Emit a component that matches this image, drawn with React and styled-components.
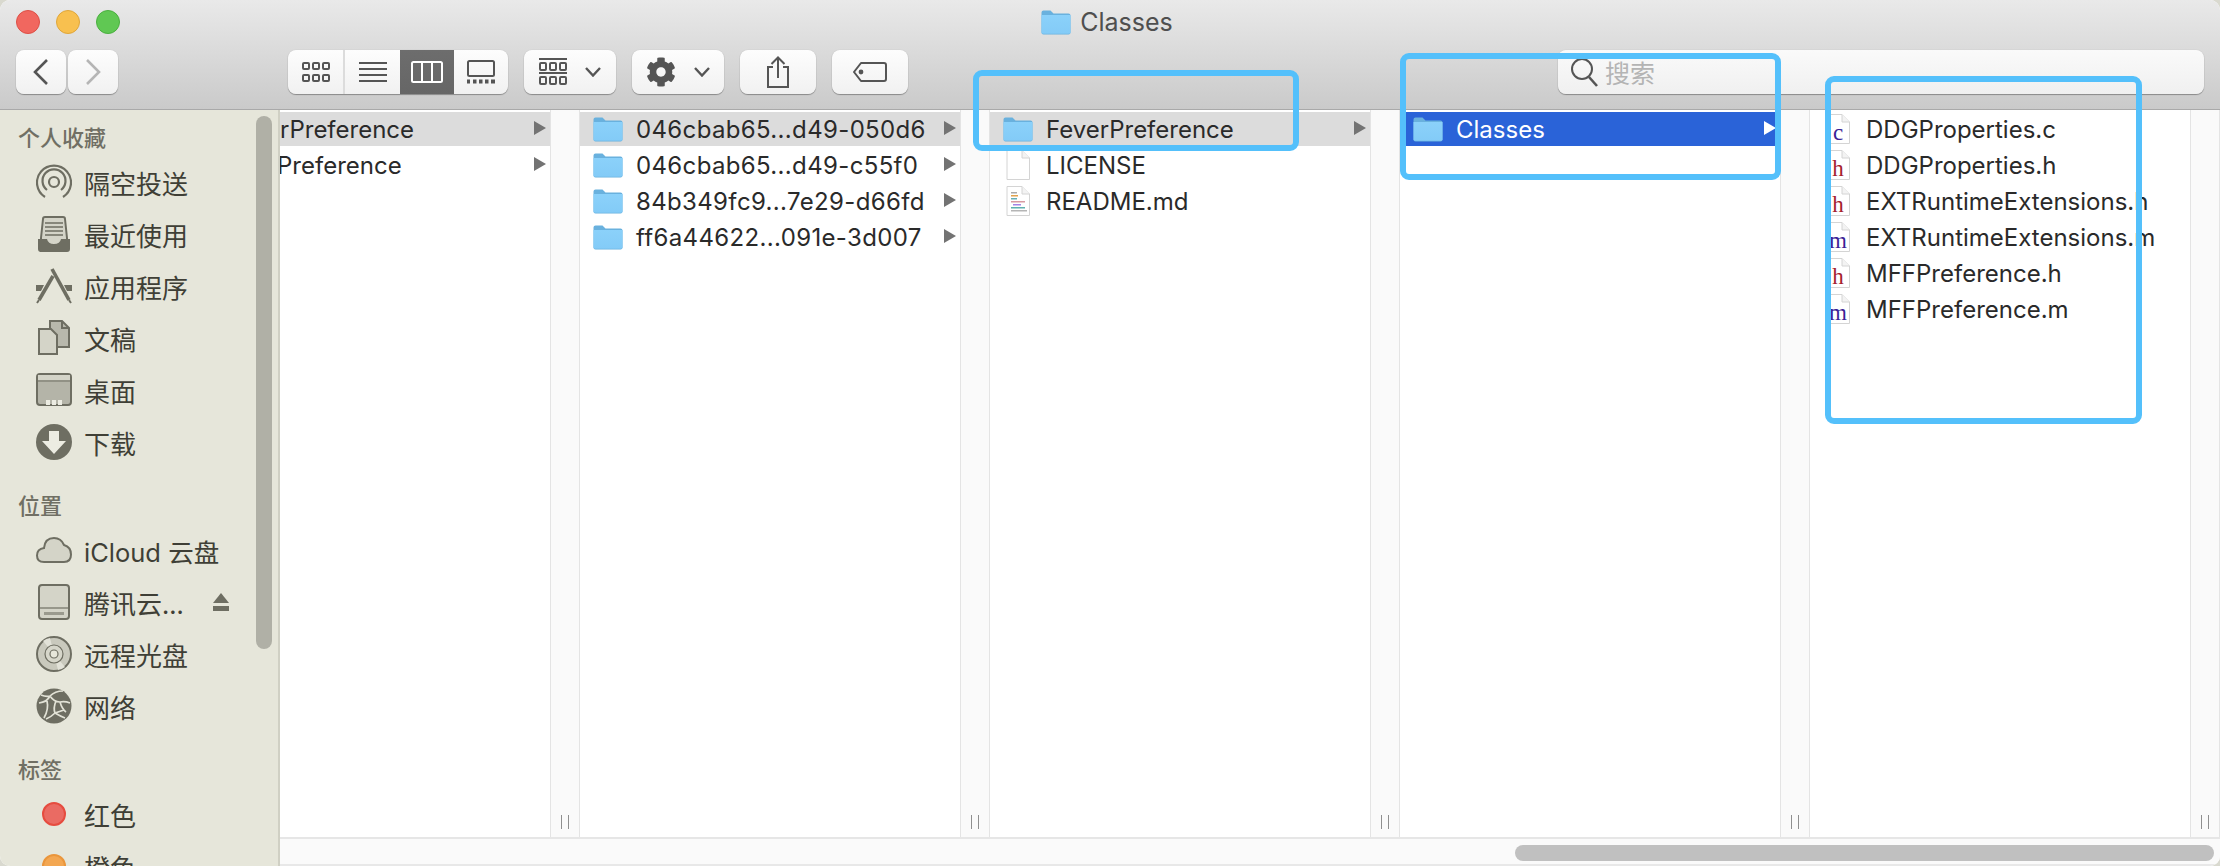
import React from "react";
import styled, { createGlobalStyle } from "styled-components";
import { FaCog } from "react-icons/fa";

const latin = `Inter, "Noto Sans CJK SC", sans-serif`;

const GlobalStyle = createGlobalStyle`
  html, body {
    margin: 0;
    padding: 0;
    background: #d9d9cf;
    overflow: hidden;
  }
`;

const Window = styled.div`
  position: relative;
  width: 2220px;
  height: 866px;
  display: flex;
  flex-direction: column;
  overflow: hidden;
  border-radius: 10px;
  font-family: ${latin};
  background: #fff;
`;

const Toolbar = styled.header`
  flex: none;
  height: 110px;
  box-sizing: border-box;
  border-bottom: 1px solid #a9a9a9;
  background: linear-gradient(#e9e9e9, #cacaca);
`;

const TitleRow = styled.div`
  height: 50px;
  display: grid;
  grid-template-columns: 1fr auto 1fr;
  align-items: center;
  padding: 0 16px;
  box-sizing: border-box;
  padding-bottom: 6px;
`;

const Lights = styled.div`
  display: flex;
  gap: 16px;
`;

const Light = styled.span`
  width: 24px;
  height: 24px;
  box-sizing: border-box;
  border-radius: 50%;
  background: ${(p) => p.$color};
  border: 1px solid ${(p) => p.$edge};
`;

const Title = styled.div`
  display: flex;
  align-items: center;
  gap: 9px;
  margin-left: -6px;
  font-size: 25px;
  color: #4f4f4f;
`;

const ToolRow = styled.div`
  display: flex;
  align-items: flex-start;
  padding: 0 16px;
`;

const Btn = styled.div`
  height: 44px;
  width: ${(p) => p.$w}px;
  margin-left: ${(p) => p.$ml || 0}px;
  flex: none;
  box-sizing: border-box;
  display: flex;
  align-items: center;
  justify-content: center;
  gap: ${(p) => p.$gap || 0}px;
  border-radius: 8px;
  background: linear-gradient(#fdfdfd, #f1f1f1);
  box-shadow: 0 1px 1px rgba(0, 0, 0, 0.32), 0 0 1px rgba(0, 0, 0, 0.2);
  color: #555;
`;

const Segments = styled.div`
  display: flex;
  height: 44px;
  width: 220px;
  margin-left: ${(p) => p.$ml}px;
  border-radius: 8px;
  overflow: hidden;
  background: linear-gradient(#fdfdfd, #f1f1f1);
  box-shadow: 0 1px 1px rgba(0, 0, 0, 0.32), 0 0 1px rgba(0, 0, 0, 0.2);
`;

const Segment = styled.div`
  width: ${(p) => p.$w}px;
  display: flex;
  align-items: center;
  justify-content: center;
  box-sizing: border-box;
  border-right: ${(p) => (p.$line ? "2px solid #dcdcdc" : "0")};
  color: ${(p) => (p.$on ? "#fff" : "#555")};
  background: ${(p) => (p.$on ? "linear-gradient(#6d6d6d, #666)" : "transparent")};
`;

const Search = styled.div`
  margin-left: auto;
  width: 646px;
  height: 44px;
  box-sizing: border-box;
  padding-left: 12px;
  display: flex;
  align-items: center;
  gap: 7px;
  border-radius: 8px;
  background: linear-gradient(#fafafa, #f0f0f0);
  box-shadow: 0 1px 1px rgba(0, 0, 0, 0.32), 0 0 1px rgba(0, 0, 0, 0.2);
  color: #b4b4b4;
  font-size: 25px;
`;

const Body = styled.div`
  flex: 1;
  min-height: 0;
  display: flex;
`;

const Sidebar = styled.aside`
  position: relative;
  flex: none;
  width: 280px;
  box-sizing: border-box;
  padding-top: 6px;
  overflow: hidden;
  background: #e6e6da;
  border-right: 2px solid #d0d0c4;
  font-family: "Noto Sans CJK SC", Inter, sans-serif;
`;

const SideThumb = styled.div`
  position: absolute;
  left: 256px;
  top: 6px;
  width: 16px;
  height: 533px;
  border-radius: 8px;
  background: #b0b0a6;
`;

const SideHead = styled.div`
  height: 40px;
  margin-top: ${(p) => p.$mt || 0}px;
  padding-left: 18px;
  display: flex;
  align-items: center;
  font-size: 22px;
  font-weight: 500;
  color: #706f64;
`;

const SideItem = styled.div`
  height: 52px;
  display: flex;
  align-items: center;
  gap: 12px;
  padding-left: 36px;
  font-size: 26px;
  color: #3f3f36;
`;

const SideLabel = styled.span`
  font-family: ${latin};
  font-size: 25.5px;
`;

const Eject = styled.svg`
  margin-left: 17px;
  flex: none;
`;

const Main = styled.main`
  flex: 1;
  min-width: 0;
  display: flex;
  flex-direction: column;
`;

const Columns = styled.div`
  flex: none;
  height: 727px;
  display: flex;
  overflow: hidden;
`;

const Column = styled.section`
  flex: none;
  width: ${(p) => p.$w}px;
  padding-top: 2px;
  box-sizing: border-box;
  overflow: hidden;
`;

const Divider = styled.div`
  flex: none;
  width: 30px;
  box-sizing: border-box;
  background: #fafafa;
  border-left: 1px solid #e4e4e4;
  border-right: 1px solid #e4e4e4;
  display: flex;
  justify-content: center;
  align-items: flex-end;
  gap: 6px;
  padding-bottom: 8px;
`;

const Grip = styled.span`
  width: 1px;
  height: 14px;
  background: #8f8f8f;
`;

const Row = styled.div`
  height: 34px;
  margin-bottom: 2px;
  display: flex;
  align-items: center;
  gap: 13px;
  padding: 0 4px 0 ${(p) => p.$pl ?? 13}px;
  font-size: 24px;
  white-space: nowrap;
  color: ${(p) => (p.$blue ? "#fff" : "#2a2a2a")};
  background: ${(p) => (p.$blue ? "#2a63d8" : p.$sel ? "#dcdcdc" : "transparent")};
`;

const Name = styled.span`
  margin-left: ${(p) => p.$ml || 0}px;
  letter-spacing: ${(p) => p.$track || 0}px;
`;

const Arrow = styled.span`
  margin-left: auto;
  width: 0;
  height: 0;
  border-left: 12px solid ${(p) => (p.$blue ? "#fff" : "#737373")};
  border-top: 7px solid transparent;
  border-bottom: 7px solid transparent;
  margin-top: -3px;
`;

const HScroll = styled.div`
  flex: 1;
  box-sizing: border-box;
  background: #fafafa;
  border-top: 2px solid #e6e6e6;
  border-bottom: 2px solid #e8e8e8;
  padding: 6px 6px 0 0;
  display: flex;
  justify-content: flex-end;
`;

const HThumb = styled.div`
  width: 699px;
  height: 16px;
  border-radius: 8px;
  background: #c0c0c0;
`;

const Mark = styled.div`
  position: absolute;
  left: ${(p) => p.$x}px;
  top: ${(p) => p.$y}px;
  width: ${(p) => p.$w}px;
  height: ${(p) => p.$h}px;
  box-sizing: border-box;
  border: 6px solid #54c0fb;
  border-radius: 9px;
  pointer-events: none;
`;

function Folder({ w = 30, h = 25 }) {
  return (
    <svg width={w} height={h} viewBox="0 0 30 25" style={{ flex: "none" }}>
      <defs>
        <linearGradient id="fld" x1="0" y1="0" x2="0" y2="1">
          <stop offset="0" stopColor="#8bd1fa" />
          <stop offset="1" stopColor="#83cbf7" />
        </linearGradient>
      </defs>
      <path d="M0.5 2.5Q0.5 0.5 2.5 0.5H9.5L12.5 3.5H27.5Q29.5 3.5 29.5 5.5V22.5Q29.5 24.5 27.5 24.5H2.5Q0.5 24.5 0.5 22.5Z" fill="#69b1de" />
      <path d="M0.5 5H29.5V22.5Q29.5 23.8 27.5 23.8H2.5Q0.5 23.8 0.5 22.500Z" fill="url(#fld)" />
    </svg>
  );
}

function Page({ letter, color, lines }) {
  return (
    <svg width="30" height="30" viewBox="0 0 30 30" style={{ flex: "none" }}>
      <path d="M4 .5H19L26.5 8V29.5H4Z" fill="#fff" stroke="#d4d4d4" />
      <path d="M19 .5V8H26.5" fill="#f3f3f3" stroke="#d4d4d4" />
      {letter && (
        <text x="15" y="25.500" textAnchor="middle" fontFamily="Liberation Serif, serif" fontSize="23" fill={color}>
          {letter}
        </text>
      )}
      {lines && (
        <g>
          <rect x="8" y="6" width="6" height="1.5" fill="#aaa" />
          <rect x="8" y="9" width="7" height="1.5" fill="#e2a24e" />
          <rect x="8" y="12" width="6" height="1.5" fill="#66aeb5" />
          <rect x="8" y="15" width="14" height="1.5" fill="#d89aa2" />
          <rect x="10" y="18" width="8" height="1.5" fill="#a583e6" />
          <rect x="8" y="21" width="14" height="1.5" fill="#5fb0b0" />
          <rect x="8" y="24" width="16" height="1.5" fill="#b5b5b5" />
        </g>
      )}
    </svg>
  );
}

const IconViewIcon = () => (
  <svg width="28" height="22" viewBox="0 0 28 22" fill="none" stroke="currentColor" strokeWidth="2">
    {[1, 11, 21].map((x) =>
      [2, 14].map((y) => <rect key={`${x}${y}`} x={x} y={y} width="6" height="6" rx="1" />)
    )}
  </svg>
);

const ListViewIcon = () => (
  <svg width="28" height="22" viewBox="0 0 28 22" stroke="currentColor" strokeWidth="2">
    <path d="M0 2H28M0 8H28M0 14H28M0 20H28" />
  </svg>
);

const ColumnViewIcon = () => (
  <svg width="32" height="22" viewBox="0 0 32 22" fill="none" stroke="currentColor" strokeWidth="2">
    <rect x="1" y="1" width="30" height="20" rx="1.5" />
    <path d="M11 1V21M21 1V21" />
  </svg>
);

const GalleryViewIcon = () => (
  <svg width="28" height="24" viewBox="0 0 28 24" fill="none" stroke="currentColor">
    <rect x="1" y="1" width="26" height="15" rx="1.5" strokeWidth="2" />
    <path d="M0 21.5H3M6 21.5H9.5M12 21.5H15.5M18 21.5H21.5M24 21.5H28" strokeWidth="4" />
  </svg>
);

const ArrangeIcon = () => (
  <svg width="28" height="28" viewBox="0 0 28 28" fill="none" stroke="currentColor" strokeWidth="2">
    <path d="M0 1H28M0 15H28" />
    {[1, 11, 21].map((x) =>
      [5, 19].map((y) => <rect key={`${x}${y}`} x={x} y={y} width="6" height="7" rx="1" />)
    )}
  </svg>
);

const Chevron = () => (
  <svg width="16" height="10" viewBox="0 0 16 10" fill="none" stroke="currentColor" strokeWidth="2.4">
    <path d="M1 1L8 8.5L15 1" />
  </svg>
);

const ShareIcon = () => (
  <svg width="22" height="32" viewBox="0 0 22 32" fill="none" stroke="currentColor" strokeWidth="2">
    <path d="M6 11H1V31H21V11H16" />
    <path d="M11 22V1.500M4.500 8L11 1.500L17.500 8" />
  </svg>
);

const TagIcon = () => (
  <svg width="34" height="20" viewBox="0 0 34 20" fill="none" stroke="currentColor" strokeWidth="2">
    <path d="M8 1H31Q33 1 33 3V17Q33 19 31 19H8L1 10Z" strokeLinejoin="round" />
    <circle cx="8" cy="10" r="1.4" fill="currentColor" />
  </svg>
);

const SearchIcon = () => (
  <svg width="28" height="30" viewBox="0 0 28 30" fill="none" stroke="#555" strokeWidth="2">
    <circle cx="12" cy="12" r="10" />
    <path d="M19 20L27 29" strokeWidth="2.6" />
  </svg>
);

const stroke = "#6e6e62";
const fill = "#d4d4c8";

const sideIcons = {
  airdrop: (
    <g fill="none" stroke={stroke} strokeWidth="2.2">
      <path d="M9 33A17 17 0 1 1 27 33" />
      <path d="M11 26A11.500 11.500 0 1 1 25 26" />
      <circle cx="18" cy="18" r="5" />
    </g>
  ),
  recents: (
    <g>
      <path d="M5 22L7 3Q7 1 9 1H27Q29 1 29 3L31 22V33Q31 35 29 35H5Z" fill={fill} stroke={stroke} strokeWidth="2" />
      <path d="M9 7H27M9 11H27M9 15H27M9 19H27" stroke={stroke} strokeWidth="1.6" />
      <path d="M2 23H11Q12 28 18 28Q24 28 25 23H34V33Q34 36 31 36H5Q2 36 2 33Z" fill={stroke} />
    </g>
  ),
  apps: (
    <g stroke={stroke} fill="none">
      <path d="M0 17H36V23H31L28 17H8L5 23H0Z" fill={stroke} stroke="none" />
      <path d="M16 1L33 32" strokeWidth="3.6" />
      <path d="M17 8L3 32" strokeWidth="3.6" />
      <path d="M33 32L35 35M3 32L1 35" strokeWidth="2" />
    </g>
  ),
  docs: (
    <g stroke={stroke} strokeWidth="2">
      <path d="M14 1H26L33 8V27H14Z" fill="#b8b8ac" />
      <path d="M3 9H15L21 15V34H3Z" fill={fill} />
      <path d="M14 1V9M26 1V8H33" fill="none" />
    </g>
  ),
  desktop: (
    <g>
      <rect x="1" y="2" width="34" height="31" rx="3" fill="#b4b4a8" stroke={stroke} strokeWidth="2" />
      <path d="M1 9H35" stroke={stroke} strokeWidth="1" />
      <rect x="2" y="3" width="32" height="5" fill={fill} />
      <path d="M10 28H14V33H10ZM16 28H20V33H16ZM22 28H26V33H22Z" fill="#ecece2" />
    </g>
  ),
  download: (
    <g>
      <circle cx="18" cy="18" r="18" fill={stroke} />
      <path d="M13 7H23V17H30L18 30L6 17H13Z" fill="#ecece2" />
    </g>
  ),
  cloud: (
    <path d="M8 30Q1 30 1 23.500Q1 17 8 16Q9 6 18 6Q25 6 28 13Q35 15 35 22.500Q35 30 28 30Z" fill={fill} stroke={stroke} strokeWidth="2" />
  ),
  drive: (
    <g stroke={stroke} strokeWidth="2">
      <rect x="3" y="1" width="30" height="34" rx="3" fill={fill} />
      <path d="M3 24H33" fill="none" strokeWidth="1.200" />
      <rect x="8" y="28" width="20" height="3" fill="#9a9a8e" strokeWidth="0" />
    </g>
  ),
  disc: (
    <g fill="none" stroke={stroke}>
      <circle cx="18" cy="18" r="17" fill="#c9c9bd" strokeWidth="2" />
      <path d="M18 18L7 5A17 17 0 0 1 14 2Z" fill="#e2e2d8" stroke="none" />
      <path d="M18 18L29 31A17 17 0 0 1 22 34Z" fill="#e2e2d8" stroke="none" />
      <circle cx="18" cy="18" r="9" strokeWidth="1.200" fill="#d6d6ca" />
      <circle cx="18" cy="18" r="4" strokeWidth="1.200" fill="#e6e6da" />
    </g>
  ),
  network: (
    <g fill="none">
      <circle cx="18" cy="18" r="17.500" fill={stroke} />
      <path d="M5 7Q10 9 14 8Q19 3 27 3M14 8Q11 14 3 15M11 13Q13 21 8 30M14 8Q18 14 24 14Q29 13 34 15M20 13Q17 20 19 25Q15 29 10 31M19 25Q24 28 29 30M24 14Q26 21 30 24M19 25L28 22" stroke="#e2e2d6" strokeWidth="1.700" />
    </g>
  ),
};

function SideIcon({ name }) {
  return (
    <svg width="36" height="36" viewBox="0 0 36 36" style={{ flex: "none" }}>
      {sideIcons[name]}
    </svg>
  );
}

function TagDot({ color, edge }) {
  return (
    <svg width="36" height="36" viewBox="0 0 36 36" style={{ flex: "none" }}>
      <circle cx="18" cy="18" r="11" fill={color} stroke={edge} strokeWidth="2" />
    </svg>
  );
}

const favourites = [
  ["airdrop", "隔空投送"],
  ["recents", "最近使用"],
  ["apps", "应用程序"],
  ["docs", "文稿"],
  ["desktop", "桌面"],
  ["download", "下载"],
];

const hashes = [
  "046cbab65...d49-050d6",
  "046cbab65...d49-c55f0",
  "84b349fc9...7e29-d66fd",
  "ff6a44622...091e-3d007",
];

const sources = [
  ["c", "#3c1f96", "DDGProperties.c"],
  ["h", "#a5202e", "DDGProperties.h"],
  ["h", "#a5202e", "EXTRuntimeExtensions.h"],
  ["m", "#3c1f96", "EXTRuntimeExtensions.m"],
  ["h", "#a5202e", "MFFPreference.h"],
  ["m", "#3c1f96", "MFFPreference.m"],
];

function Gap() {
  return (
    <Divider>
      <Grip />
      <Grip />
    </Divider>
  );
}

export default function App() {
  return (
    <>
      <GlobalStyle />
      <Window>
        <Toolbar>
          <TitleRow>
            <Lights>
              <Light $color="#f1675f" $edge="#dd4f46" />
              <Light $color="#f8c04f" $edge="#dfa63a" />
              <Light $color="#60c853" $edge="#4aaf3f" />
            </Lights>
            <Title>
              <Folder />
              Classes
            </Title>
          </TitleRow>
          <ToolRow>
            <Btn $w={50}>
              <svg width="16" height="26" viewBox="0 0 16 26" fill="none" stroke="#555" strokeWidth="2.6">
                <path d="M14 1L2 13L14 25" />
              </svg>
            </Btn>
            <Btn $w={50} $ml={2}>
              <svg width="16" height="26" viewBox="0 0 16 26" fill="none" stroke="#b5b5b5" strokeWidth="2.6">
                <path d="M2 1L14 13L2 25" />
              </svg>
            </Btn>
            <Segments $ml={170}>
              <Segment $w={57} $line><IconViewIcon /></Segment>
              <Segment $w={55}><ListViewIcon /></Segment>
              <Segment $w={54} $on><ColumnViewIcon /></Segment>
              <Segment $w={54}><GalleryViewIcon /></Segment>
            </Segments>
            <Btn $w={92} $ml={16} $gap={18}><ArrangeIcon /><Chevron /></Btn>
            <Btn $w={92} $ml={16} $gap={18}><FaCog size={30} /><Chevron /></Btn>
            <Btn $w={76} $ml={16}><ShareIcon /></Btn>
            <Btn $w={76} $ml={16}><TagIcon /></Btn>
            <Search>
              <SearchIcon />
              搜索
            </Search>
          </ToolRow>
        </Toolbar>
        <Body>
          <Sidebar>
            <SideThumb />
            <SideHead>个人收藏</SideHead>
            {favourites.map(([icon, label]) => (
              <SideItem key={icon}><SideIcon name={icon} />{label}</SideItem>
            ))}
            <SideHead $mt={16}>位置</SideHead>
            <SideItem><SideIcon name="cloud" /><SideLabel>iCloud 云盘</SideLabel></SideItem>
            <SideItem>
              <SideIcon name="drive" />
              腾讯云...
              <Eject width="16" height="18" viewBox="0 0 16 18">
                <path d="M8 0L16 10H0Z" fill="#6e6e62" />
                <rect y="13" width="16" height="5" fill="#6e6e62" />
              </Eject>
            </SideItem>
            <SideItem><SideIcon name="disc" />远程光盘</SideItem>
            <SideItem><SideIcon name="network" />网络</SideItem>
            <SideHead $mt={16}>标签</SideHead>
            <SideItem><TagDot color="#ea6b63" edge="#e64c3f" />红色</SideItem>
            <SideItem><TagDot color="#f3a752" edge="#ea963c" />橙色</SideItem>
          </Sidebar>
          <Main>
            <Columns>
              <Column $w={270}>
                <Row $sel $pl={0}><Name>rPreference</Name><Arrow /></Row>
                <Row $pl={0}><Name $ml={-3}>Preference</Name><Arrow /></Row>
              </Column>
              <Gap />
              <Column $w={380}>
                {hashes.map((h, i) => (
                  <Row key={h} $sel={i === 0}><Folder /><Name $track={0.35}>{h}</Name><Arrow /></Row>
                ))}
              </Column>
              <Gap />
              <Column $w={380}>
                <Row $sel><Folder /><Name>FeverPreference</Name><Arrow /></Row>
                <Row><Page /><Name>LICENSE</Name></Row>
                <Row><Page lines /><Name>README.md</Name></Row>
              </Column>
              <Gap />
              <Column $w={380}>
                <Row $blue><Folder /><Name>Classes</Name><Arrow $blue /></Row>
              </Column>
              <Gap />
              <Column $w={380}>
                {sources.map(([letter, color, name]) => (
                  <Row key={name}><Page letter={letter} color={color} /><Name>{name}</Name></Row>
                ))}
              </Column>
              <Gap />
            </Columns>
            <HScroll><HThumb /></HScroll>
          </Main>
        </Body>
        <Mark $x={973} $y={70} $w={326} $h={81} />
        <Mark $x={1400} $y={53} $w={381} $h={127} />
        <Mark $x={1825} $y={76} $w={317} $h={348} />
      </Window>
    </>
  );
}
